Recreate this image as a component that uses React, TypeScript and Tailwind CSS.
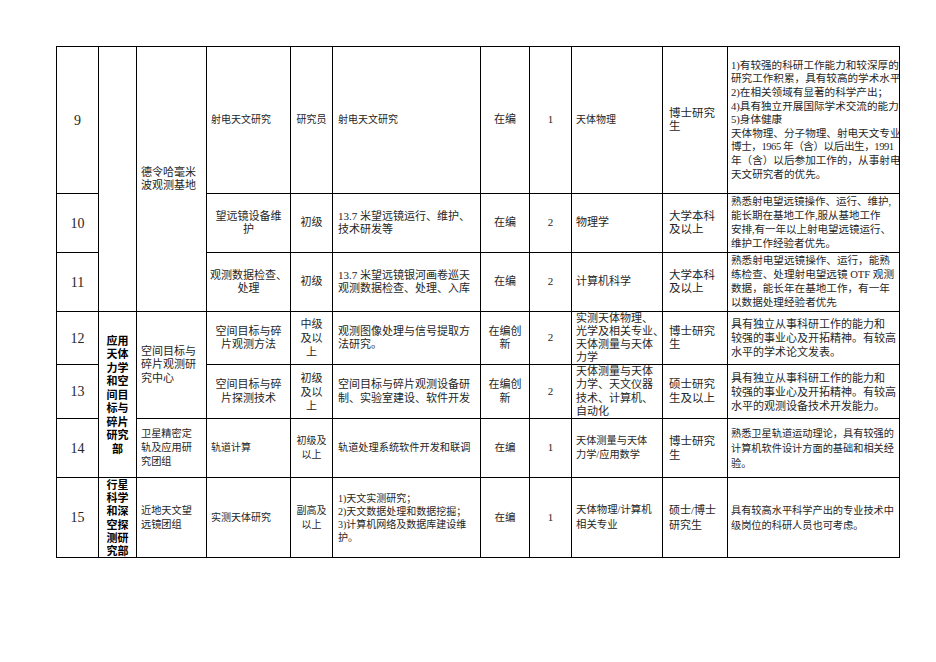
import React from "react";

type Line = string | [string, string];

type CellProps = {
  lines: Line[];
  align?: "left" | "center";
  pl?: string;
  cls?: string;
  span?: string;
  lh?: string;
  size?: string;
  bold?: boolean;
};

const FONT = "[font-family:'Liberation_Serif','Noto_Sans_CJK_SC',serif]";

function Cell({ lines, align = "left", pl = "pl-[4px]", cls = "", span = "", lh = "leading-[13.5px]", size = "text-[11px]", bold = false }: CellProps) {
  return (
    <div
      className={`border-r border-b border-black flex flex-col justify-center overflow-hidden ${span} ${align === "center" ? "items-center text-center" : "items-start text-left " + pl} ${cls}`}
    >
      {lines.map((l, i) => {
        const text = typeof l === "string" ? l : l[0];
        const extra = typeof l === "string" ? "" : l[1];
        return (
          <span
            key={i}
            className={`block whitespace-nowrap ${lh} ${size} ${extra} ${bold ? "font-bold [font-family:'Noto_Sans_CJK_SC',sans-serif] text-black" : FONT + " text-[#262626]"}`}
          >
            {text}
          </span>
        );
      })}
    </div>
  );
}

function Num({ n }: { n: string }) {
  return (
    <div className="border-r border-b border-black flex items-center justify-center">
      <span className={`text-[14px] ${FONT} text-[#262626]`}>{n}</span>
    </div>
  );
}

export default function App() {
  return (
    <div className="w-[936px] h-[662px] bg-white pt-[46px] pl-[56px]">
      <div className="grid grid-cols-[42px_38px_70px_84px_42px_148px_49px_42px_91px_65px_172px] grid-rows-[147px_59px_59px_53px_54px_59px_80px] border-l border-t border-black w-[844px]">
        {/* Row 9 */}
        <Num n="9" />
        <div className="border-r border-b border-black row-span-3" />
        <Cell span="row-span-3" lines={["德令哈毫米", "波观测基地"]} />
        <Cell lines={["射电天文研究"]} size="text-[10px]" />
        <Cell align="center" lines={["研究员"]} size="text-[10px]" />
        <Cell pl="pl-[5px]" lines={["射电天文研究"]} size="text-[10px]" />
        <Cell align="center" lines={["在编"]} />
        <Cell align="center" lines={["1"]} />
        <Cell lines={["天体物理"]} size="text-[10px]" />
        <Cell pl="pl-[6px]" lines={["博士研究", "生"]} size="text-[11.5px]" />
        <Cell
          pl="pl-[3px]"
          size="text-[10.6px]"
          lh="leading-[13.6px]"
          lines={[
            "1)有较强的科研工作能力和较深厚的",
            "研究工作积累，具有较高的学术水平",
            "2)在相关领域有显著的科学产出；",
            "4)具有独立开展国际学术交流的能力",
            "5)身体健康",
            "天体物理、分子物理、射电天文专业",
            ["博士，1965 年（含）以后出生，1991", "tracking-[-0.45px]"],
            "年（含）以后参加工作的，从事射电",
            "天文研究者的优先。",
          ]}
        />

        {/* Row 10 */}
        <Num n="10" />
        <Cell align="center" lines={["望远镜设备维", "护"]} />
        <Cell align="center" lines={["初级"]} />
        <Cell pl="pl-[5px]" lines={["13.7 米望远镜运行、维护、", "技术研发等"]} />
        <Cell align="center" lines={["在编"]} />
        <Cell align="center" lines={["2"]} />
        <Cell lines={["物理学"]} />
        <Cell pl="pl-[6px]" lines={["大学本科", "及以上"]} size="text-[11.5px]" />
        <Cell
          pl="pl-[3px]"
          size="text-[10.5px]"
          lh="leading-[14px]"
          lines={[
            "熟悉射电望远镜操作、运行、维护,",
            "能长期在基地工作,服从基地工作",
            "安排,有一年以上射电望远镜运行、",
            "维护工作经验者优先。",
          ]}
        />

        {/* Row 11 */}
        <Num n="11" />
        <Cell align="center" lines={["观测数据检查、", "处理"]} />
        <Cell align="center" lines={["初级"]} />
        <Cell pl="pl-[5px]" lines={["13.7 米望远镜银河画卷巡天", "观测数据检查、处理、入库"]} />
        <Cell align="center" lines={["在编"]} />
        <Cell align="center" lines={["2"]} />
        <Cell lines={["计算机科学"]} />
        <Cell pl="pl-[6px]" lines={["大学本科", "及以上"]} size="text-[11.5px]" />
        <Cell
          pl="pl-[3px]"
          size="text-[10.6px]"
          lh="leading-[14px]"
          lines={[
            "熟悉射电望远镜操作、运行，能熟",
            "练检查、处理射电望远镜 OTF 观测",
            "数据，能长年在基地工作，有一年",
            "以数据处理经验者优先",
          ]}
        />

        {/* Row 12 */}
        <Num n="12" />
        <Cell
          span="row-span-3"
          align="center"
          bold
          lh="leading-[13.5px]"
          lines={["应用", "天体", "力学", "和空", "间目", "标与", "碎片", "研究", "部"]}
        />
        <Cell span="row-span-2" lines={["空间目标与", "碎片观测研", "究中心"]} />
        <Cell align="center" lines={["空间目标与碎", "片观测方法"]} />
        <Cell align="center" lh="leading-[14px]" lines={["中级", "及以", "上"]} />
        <Cell pl="pl-[5px]" lines={["观测图像处理与信号提取方", "法研究。"]} />
        <Cell align="center" lines={["在编创", "新"]} />
        <Cell align="center" lines={["2"]} />
        <Cell lh="leading-[13.2px]" lines={["实测天体物理、", "光学及相关专业、", "天体测量与天体", "力学"]} />
        <Cell pl="pl-[6px]" lines={["博士研究", "生"]} size="text-[11.5px]" />
        <Cell
          pl="pl-[3px]"
          lh="leading-[14px]"
          lines={["具有独立从事科研工作的能力和", "较强的事业心及开拓精神。有较高", "水平的学术论文发表。"]}
        />

        {/* Row 13 */}
        <Num n="13" />
        <Cell align="center" lines={["空间目标与碎", "片探测技术"]} />
        <Cell align="center" lh="leading-[14px]" lines={["初级", "及以", "上"]} />
        <Cell pl="pl-[5px]" lines={["空间目标与碎片观测设备研", "制、实验室建设、软件开发"]} />
        <Cell align="center" lines={["在编创", "新"]} />
        <Cell align="center" lines={["2"]} />
        <Cell lh="leading-[13.5px]" lines={["天体测量与天体", "力学、天文仪器", "技术、计算机、", "自动化"]} />
        <Cell pl="pl-[6px]" lines={["硕士研究", "生及以上"]} size="text-[11.5px]" />
        <Cell
          pl="pl-[3px]"
          lh="leading-[14px]"
          lines={["具有独立从事科研工作的能力和", "较强的事业心及开拓精神。有较高", "水平的观测设备技术开发能力。"]}
        />

        {/* Row 14 */}
        <Num n="14" />
        <Cell size="text-[10.2px]" lh="leading-[14px]" lines={["卫星精密定", "轨及应用研", "究团组"]} />
        <Cell size="text-[10px]" lines={["轨道计算"]} />
        <Cell align="center" size="text-[10px]" lh="leading-[14px]" lines={["初级及", "以上"]} />
        <Cell pl="pl-[5px]" size="text-[10.2px]" lines={["轨道处理系统软件开发和联调"]} />
        <Cell align="center" size="text-[10.5px]" lines={["在编"]} />
        <Cell align="center" lines={["1"]} />
        <Cell size="text-[10.2px]" lh="leading-[14px]" lines={["天体测量与天体", "力学/应用数学"]} />
        <Cell pl="pl-[6px]" lines={["博士研究", "生"]} size="text-[11.5px]" lh="leading-[14.5px]" />
        <Cell
          pl="pl-[3px]"
          size="text-[10.2px]"
          lh="leading-[15px]"
          lines={["熟悉卫星轨道运动理论，具有较强的", "计算机软件设计方面的基础和相关经", "验。"]}
        />

        {/* Row 15 */}
        <Num n="15" />
        <Cell align="center" bold lh="leading-[13.3px]" lines={["行星", "科学", "和深", "空探", "测研", "究部"]} />
        <Cell size="text-[10.2px]" lh="leading-[14px]" lines={["近地天文望", "远镜团组"]} />
        <Cell size="text-[10px]" lines={["实测天体研究"]} />
        <Cell align="center" size="text-[10px]" lh="leading-[14px]" lines={["副高及", "以上"]} />
        <Cell
          pl="pl-[5px]"
          size="text-[10px]"
          lh="leading-[13px]"
          lines={["1)天文实测研究；", "2)天文数据处理和数据挖掘；", "3)计算机网络及数据库建设维", "护。"]}
        />
        <Cell align="center" size="text-[10.5px]" lines={["在编"]} />
        <Cell align="center" lines={["1"]} />
        <Cell size="text-[10.4px]" lh="leading-[14.5px]" lines={["天体物理/计算机", "相关专业"]} />
        <Cell pl="pl-[6px]" lines={["硕士/博士", "研究生"]} size="text-[11px]" lh="leading-[15px]" />
        <Cell pl="pl-[3px]" size="text-[10.2px]" lh="leading-[15px]" lines={["具有较高水平科学产出的专业技术中", "级岗位的科研人员也可考虑。"]} />
      </div>
    </div>
  );
}
